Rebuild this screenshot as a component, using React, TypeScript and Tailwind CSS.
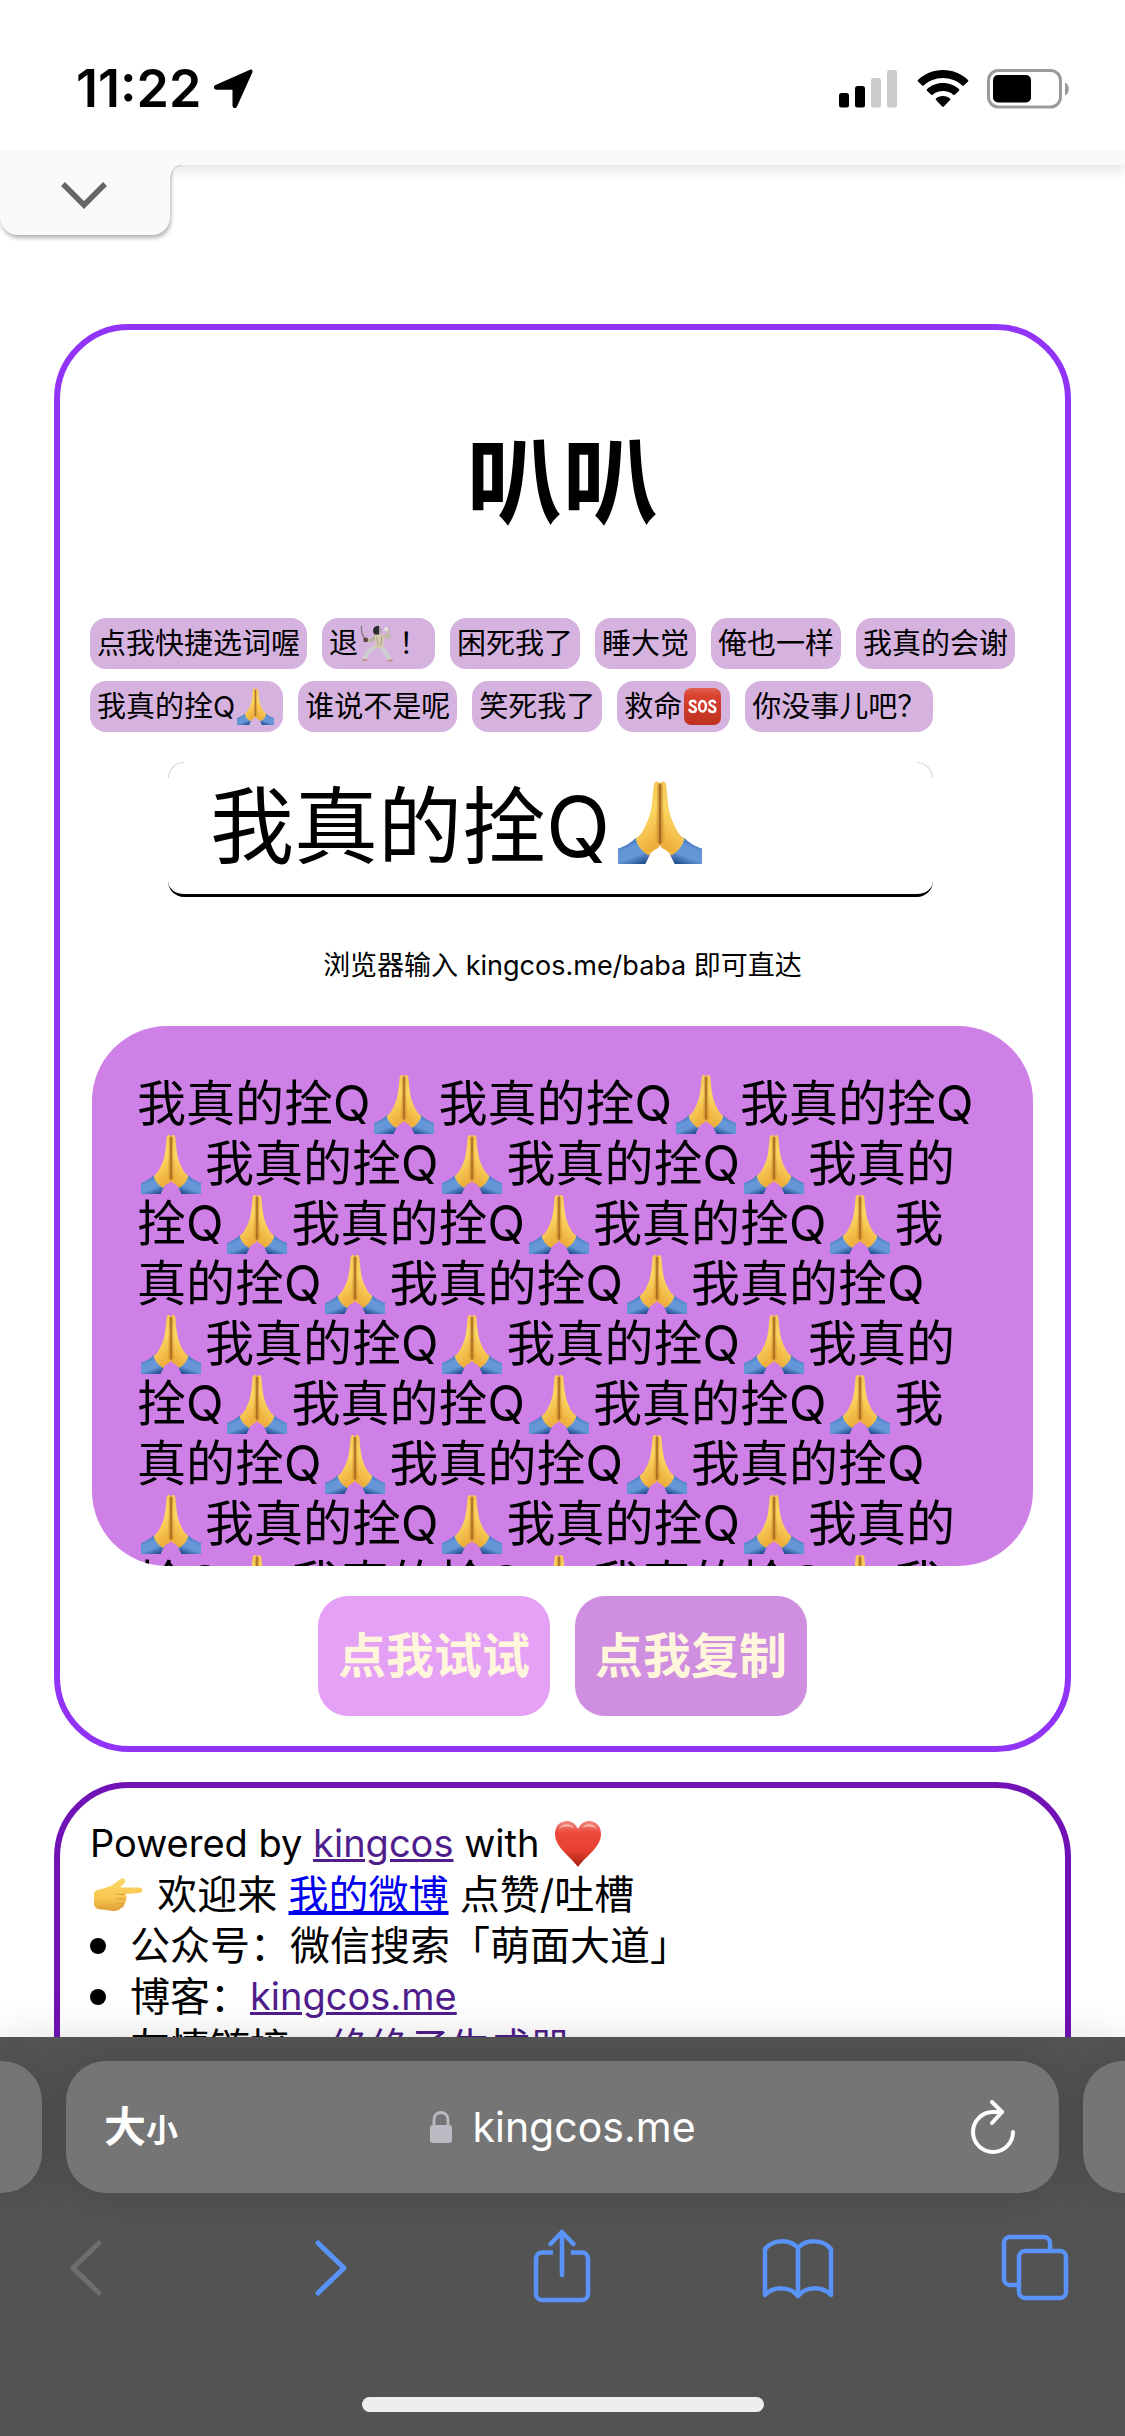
import React from 'react';

const PHRASE = '我真的拴Q';

type IconProps = { className: string };

function EmojiDefs() {
  return (
    <svg className="absolute h-0 w-0" aria-hidden="true">
      <defs>
        <linearGradient id="skin" x1="0" y1="0" x2="0.3" y2="1">
          <stop offset="0" stopColor="#f2bf4a" />
          <stop offset="0.55" stopColor="#fbd562" />
          <stop offset="1" stopColor="#eeaf3c" />
        </linearGradient>
        <linearGradient id="skinDark" x1="0" y1="0" x2="1" y2="0">
          <stop offset="0" stopColor="#e0a033" stopOpacity="0" />
          <stop offset="1" stopColor="#a8661a" />
        </linearGradient>
        <linearGradient id="sleeve" x1="0.3" y1="0" x2="0.8" y2="1">
          <stop offset="0" stopColor="#3468b0" />
          <stop offset="0.35" stopColor="#6496d8" />
          <stop offset="0.65" stopColor="#6496d8" />
          <stop offset="1" stopColor="#1f4a8c" />
        </linearGradient>
        <linearGradient id="heart" x1="0" y1="0" x2="0" y2="1">
          <stop offset="0" stopColor="#f0877c" />
          <stop offset="0.25" stopColor="#ee4a3d" />
          <stop offset="0.65" stopColor="#e5402f" />
          <stop offset="1" stopColor="#a51f12" />
        </linearGradient>
        <linearGradient id="sos" x1="0" y1="0" x2="0" y2="1">
          <stop offset="0" stopColor="#e0604e" />
          <stop offset="0.2" stopColor="#d9432f" />
          <stop offset="1" stopColor="#bf3120" />
        </linearGradient>
        <linearGradient id="point" x1="0" y1="0" x2="0" y2="1">
          <stop offset="0" stopColor="#fbd568" />
          <stop offset="0.6" stopColor="#f8c750" />
          <stop offset="1" stopColor="#e09d38" />
        </linearGradient>
      </defs>
    </svg>
  );
}

function PrayHalf() {
  return (
    <>
      <path d="M0 49C5 47 9 45 13 41C14 47 17 51 23 53L19.500 60H0Z" fill="url(#sleeve)" />
      <path
        d="M30 3C29.500 .5 26.500 .2 25.700 3C25 8 25 12 24.200 17C23.500 24 21.500 29 18.500 35C16.500 38.500 14.500 41 12.500 42C14 47 17 51 22 54C23.500 51.500 26 50 28 49C29.500 48 30 47 30 45.500Z"
        fill="url(#skin)"
      />
      <path d="M27.800 5C28 18 27.500 33 25.500 42C27 45 29 46 30 45V3C29.400 1.500 28.500 2 27.800 5Z" fill="url(#skinDark)" opacity="0.7" />
    </>
  );
}

function Pray({ className }: IconProps) {
  return (
    <svg viewBox="0 0 60 60" className={className} role="img" aria-label="🙏">
      <PrayHalf />
      <g transform="matrix(-1 0 0 1 60 0)">
        <PrayHalf />
      </g>
      <path d="M30 3V46" stroke="#96591b" strokeWidth="0.900" />
    </svg>
  );
}

function Sos({ className }: IconProps) {
  return (
    <svg viewBox="0 0 36 36" className={className} role="img" aria-label="🆘">
      <rect width="36" height="36" rx="7" fill="url(#sos)" />
      <g fill="none" stroke="#fff" strokeWidth="2.400" strokeLinecap="round" strokeLinejoin="round">
        <path d="M11.200 14C10.200 11.800 5.800 12 5.800 14.700C5.800 18.300 11.500 17 11.500 20.800C11.500 24 6.300 24 5.300 21.200" />
        <ellipse cx="18" cy="17.800" rx="3.300" ry="5.200" />
        <path d="M30.200 14C29.200 11.800 24.800 12 24.800 14.700C24.800 18.300 30.500 17 30.500 20.800C30.500 24 25.300 24 24.300 21.200" />
      </g>
    </svg>
  );
}

function Fencer({ className }: IconProps) {
  return (
    <svg viewBox="0 0 36 36" className={className} role="img" aria-label="🤺">
      <path d="M1.500 1C1 6 2 10 5 14" fill="none" stroke="#77757a" strokeWidth="1.200" />
      <g fill="none" strokeLinecap="round" strokeLinejoin="round">
        <path d="M15 11.500L11 15L6 14.500" stroke="#b9b2a2" strokeWidth="3.400" />
        <path d="M22 11L28 12L26.500 5" stroke="#c3bcab" strokeWidth="3.400" />
        <path d="M15.500 21L8.500 25L4.500 32" stroke="#cfcfd2" strokeWidth="4" />
        <path d="M20.500 21L24.500 27L28.500 32.500" stroke="#cfcfd2" strokeWidth="4" />
        <path d="M3 34H6M28 34.500H31" stroke="#c98d84" strokeWidth="2" />
      </g>
      <path d="M14 9.500L22.500 9L23.500 13L22 22.500L14 22.500L15 16Z" fill="#d3cab0" />
      <path d="M16 12L18 20M21 11L20.500 20" stroke="#a89d82" strokeWidth="0.900" />
      <circle cx="17" cy="5" r="4.200" fill="#a9a8ab" />
      <path d="M18.500 .8C12.500 .5 11.500 6 14 9.200C16 9.500 18.500 9 18.500 9Z" fill="#2c2b2f" />
      <circle cx="25.500" cy="4" r="2" fill="#e9e4da" />
      <circle cx="5.500" cy="14.500" r="2.300" fill="#5c4642" />
    </svg>
  );
}

function Heart({ className }: IconProps) {
  return (
    <svg viewBox="0 0 48 48" className={className} role="img" aria-label="❤️">
      <path d="M24 9C21 3 17 1 13 1C6 1 1 6 1 14C1 27 15 35 24 47C33 35 47 27 47 14C47 6 42 1 35 1C31 1 27 3 24 9Z" fill="url(#heart)" />
      <path d="M5 9C7 4 16 2 20 8C15 6 9 6 5 9ZM28 8C32 2 41 4 43 9C39 6 33 6 28 8Z" fill="#fff" opacity="0.5" />
    </svg>
  );
}

function PointRight({ className }: IconProps) {
  return (
    <svg viewBox="0 0 50 34" className={className} role="img" aria-label="👉">
      <path
        d="M1 16C1 12 5 12 10 10.500C17 9 21 6 27 1.500C31 -1 34 2 31.500 5C30 7 28 8 27 9.500L46 9.500C50.500 9.800 50.500 14.800 46 15L32 16C34.500 18 33.500 20 32.500 20.500C34 22.500 33 25 31 25.500C32 28 30 30 28 30C26 33 21 33.500 16 32.500C9 31 1 33 1 25Z"
        fill="url(#point)"
      />
      <path d="M32 16C29 17 26 16.500 24 16M32.500 20.500C29 21.500 26 21 24 20.500M31 25.500C29 26.500 26 26 24 25" fill="none" stroke="#d99a35" strokeWidth="1" strokeLinecap="round" />
    </svg>
  );
}

function StatusBar() {
  return (
    <header className="flex h-[150px] shrink-0 items-center justify-between pr-[55px] pl-[76px] pt-7">
      <div className="flex items-center gap-3">
        <span className="text-[52px] leading-none font-semibold">11:22</span>
        <svg viewBox="0 0 40 40" className="size-10" aria-label="Location">
          <path d="M37 .800C39 0 40 1.500 39.300 3.500L24 37.500C23 40 19.500 39.500 19.500 36.500V21.500C19.500 21 19 20.700 18.500 20.700H3.500C.5 20.700 0 17 2.500 16Z" />
        </svg>
      </div>
      <div className="flex items-center gap-[18px]">
        <svg viewBox="0 0 60 38" className="h-[38px] w-[60px]" aria-label="Signal">
          <rect x="0" y="23" width="10" height="14.500" rx="2.500" />
          <rect x="16" y="16" width="10" height="21.500" rx="2.500" />
          <rect x="32" y="8" width="10" height="29.500" rx="2.500" fill="#cbcbcb" />
          <rect x="48" y="0" width="10" height="37.500" rx="2.500" fill="#cbcbcb" />
        </svg>
        <svg viewBox="0 0 52 38" className="h-[38px] w-[52px]" aria-label="Wi-Fi">
          <path d="M26 0C36 0 45 4 51 10C51.500 10.500 51.500 11 51 11.500L46.800 15.500C46.300 16 45.800 16 45.300 15.500C40 10.800 33.500 8 26 8C18.500 8 12 10.800 6.700 15.500C6.200 16 5.700 16 5.200 15.500L1 11.500C.5 11 .5 10.500 1 10C7 4 16 0 26 0Z" />
          <path d="M26 13C32.500 13 38 15.500 42 19.200C42.500 19.700 42.500 20.200 42 20.700L37.800 24.700C37.300 25.200 36.800 25.200 36.300 24.700C33.500 22.300 30 21 26 21C22 21 18.500 22.300 15.700 24.700C15.200 25.200 14.700 25.200 14.200 24.700L10 20.700C9.500 20.200 9.500 19.700 10 19.200C14 15.500 19.500 13 26 13Z" />
          <path d="M26 26C29 26 31.500 27 33 28.500C33.500 29 33.500 29.500 33 30L26.800 36.500C26.400 37 25.600 37 25.200 36.500L19 30C18.500 29.500 18.500 29 19 28.500C20.500 27 23 26 26 26Z" />
        </svg>
        <svg viewBox="0 0 83 40" className="h-10 w-[83px]" aria-label="Battery">
          <rect x="1.500" y="1.500" width="72" height="36.500" rx="10" fill="none" stroke="#9a9a9a" strokeWidth="3" />
          <rect x="6" y="6" width="38" height="27.500" rx="5" />
          <path d="M78 13.500C83 15 83 25 78 26.500Z" fill="#9a9a9a" />
        </svg>
      </div>
    </header>
  );
}

const CHIPS: { text: string; emoji?: 'fencer' | 'pray' | 'sos'; after?: string }[] = [
  { text: '点我快捷选词喔' },
  { text: '退', emoji: 'fencer', after: '！' },
  { text: '困死我了' },
  { text: '睡大觉' },
  { text: '俺也一样' },
  { text: '我真的会谢' },
  { text: '我真的拴Q', emoji: 'pray' },
  { text: '谁说不是呢' },
  { text: '笑死我了' },
  { text: '救命', emoji: 'sos' },
  { text: '你没事儿吧？' },
];

function Chips() {
  return (
    <div className="flex flex-wrap gap-x-[15px] gap-y-3">
      {CHIPS.map((chip) => (
        <button key={chip.text} className="flex h-[51px] items-center rounded-2xl bg-[#d6b2df] px-[7px] text-[29px] leading-none">
          {chip.text}
          {chip.emoji === 'fencer' && <Fencer className="mx-0.5 size-[37px]" />}
          {chip.emoji === 'pray' && <Pray className="mx-0.5 size-[37px]" />}
          {chip.emoji === 'sos' && <Sos className="mx-0.5 size-[37px]" />}
          {chip.after}
        </button>
      ))}
    </div>
  );
}

function PhraseInput() {
  return (
    <label className="relative mt-[30px] mr-[102px] ml-[78px] flex h-[135px] items-center rounded-2xl border-b-[3px] border-black pb-3 pl-[42px]">
      <span className="sr-only">词语</span>
      <input defaultValue={PHRASE} className="[field-sizing:content] bg-transparent pb-1 text-[84px] leading-none outline-none" />
      <Pray className="ml-2 size-[84px]" />
      <span className="absolute top-0 left-0 size-4 rounded-tl-2xl border-t border-l border-gray-300" />
      <span className="absolute top-0 right-0 size-4 rounded-tr-2xl border-t border-r border-gray-300" />
    </label>
  );
}

function Output() {
  return (
    <div className="mx-0.5 mt-10 h-[540px] overflow-hidden rounded-[75px] bg-[#cf80e6] pt-12 pr-[50px] pl-[45px] text-[49px] leading-[60px]">
      {Array.from({ length: 27 }, (_, i) => (
        <React.Fragment key={i}>
          {PHRASE}
          <Pray className="mx-1 inline-block size-[60px] align-top" />
        </React.Fragment>
      ))}
    </div>
  );
}

function BrowserBar() {
  return (
    <footer className="relative h-[399px] shrink-0 bg-[#535354] text-white shadow-[0_0_40px_rgba(0,0,0,0.12)]">
      <div className="flex gap-6 pt-6">
        <div className="h-[132px] w-[42px] rounded-r-[40px] bg-[#757476] shadow-[0_0_40px_rgba(0,0,0,0.15)]" />
        <div className="flex h-[132px] flex-1 items-center justify-between rounded-[40px] bg-[#757576] pr-11 pl-[38px] shadow-[0_0_40px_rgba(0,0,0,0.15)]">
          <button className="flex items-baseline leading-none font-bold" aria-label="大小">
            <span className="text-[42px]">大</span>
            <span className="text-[32px]">小</span>
          </button>
          <a href="#address" className="flex items-center gap-5 text-[41px] leading-none">
            <svg viewBox="0 0 22 32" className="h-8 w-[22px]" aria-hidden="true">
              <rect y="14" width="22" height="18" rx="3" fill="#babac3" />
              <path d="M4 15V9C4 -1 18 -1 18 9V15" fill="none" stroke="#babac3" strokeWidth="2.800" />
            </svg>
            kingcos.me
          </a>
          <button aria-label="Reload" className="flex w-[67px] justify-end">
            <svg viewBox="0 0 44 54" className="h-[54px] w-11" fill="none" stroke="#fff" strokeWidth="4" strokeLinecap="round" strokeLinejoin="round">
              <path d="M42 32A20 20 0 1 1 22 12H31" />
              <path d="M21 2L31 12L21 23" />
            </svg>
          </button>
        </div>
        <div className="h-[132px] w-[42px] rounded-l-[40px] bg-[#757476] shadow-[0_0_40px_rgba(0,0,0,0.15)]" />
      </div>
      <nav className="mt-9 flex justify-between pr-[54px] pl-[50px] text-[#5a93f8]">
        <button aria-label="Back" className="text-[#6e6e70]">
          <svg viewBox="0 0 74 74" className="size-[74px]" fill="none" stroke="currentColor" strokeWidth="5" strokeLinecap="round" strokeLinejoin="round">
            <path d="M49 14L23 39L49 64" />
          </svg>
        </button>
        <button aria-label="Forward">
          <svg viewBox="0 0 74 74" className="size-[74px]" fill="none" stroke="currentColor" strokeWidth="5" strokeLinecap="round" strokeLinejoin="round">
            <path d="M31 14L57 39L31 64" />
          </svg>
        </button>
        <button aria-label="Share">
          <svg viewBox="0 0 74 74" className="size-[74px]" fill="none" stroke="currentColor" strokeWidth="4.500" strokeLinecap="round" strokeLinejoin="round">
            <path d="M29 23.500H18A6 6 0 0 0 12 29.500V65A6 6 0 0 0 18 71H58A6 6 0 0 0 64 65V29.500A6 6 0 0 0 58 23.500H47" strokeLinecap="butt" />
            <path d="M38 46V3M26.500 15L38 3L49.500 15" />
          </svg>
        </button>
        <button aria-label="Bookmarks">
          <svg viewBox="0 0 74 74" className="size-[74px]" fill="none" stroke="currentColor" strokeWidth="4.500" strokeLinecap="round" strokeLinejoin="round">
            <path d="M38 67C30 57 14 57 5 66V20C13 10 30 10 38 19C46 10 63 10 71 20V66C62 57 46 57 38 67V19" />
          </svg>
        </button>
        <button aria-label="Tabs">
          <svg viewBox="0 0 74 74" className="size-[74px]" fill="none" stroke="currentColor" strokeWidth="4.500">
            <rect x="22" y="22" width="47" height="47" rx="6" />
            <path d="M22 56H13A6 6 0 0 1 7 50V14A6 6 0 0 1 13 8H47A6 6 0 0 1 53 14V22" />
          </svg>
        </button>
      </nav>
      <div className="absolute bottom-6 left-1/2 h-[15px] w-[402px] -translate-x-1/2 rounded-full bg-[#eee]" />
    </footer>
  );
}

const ITEM =
  "flex items-center before:mr-6 before:size-4 before:rounded-full before:bg-black before:content-['']";

export default function App() {
  return (
    <div className="flex h-screen flex-col overflow-hidden bg-white font-[Inter,'Noto_Sans_CJK_SC',sans-serif] text-black">
      <EmojiDefs />
      <StatusBar />
      <main className="min-h-0 flex-1 overflow-hidden">
        <div className="relative h-[15px] bg-[#fafafa] shadow-[0_6px_12px_rgba(0,0,0,0.1)]">
          <button
            aria-label="Expand"
            className="absolute top-0 left-0 flex h-[85px] w-[170px] items-center justify-center rounded-b-[18px] bg-[#fafafa] pt-1 pr-0.5 shadow-[1px_3px_4px_rgba(0,0,0,0.3)]"
          >
            <svg viewBox="0 0 46 28" className="h-7 w-[46px]" fill="none" stroke="#666" strokeWidth="5.500">
              <path d="M2 3L23 24L44 3" />
            </svg>
          </button>
          <svg viewBox="0 0 14 32" className="absolute top-0 left-[169px] h-8 w-[14px]" aria-hidden="true">
            <path d="M0 0H14V15C6 15 1 20 1 32H0Z" fill="#fafafa" />
            <path d="M13 15.500C6 15.500 1.500 20 1.500 32" fill="none" stroke="#c8c8c8" />
          </svg>
        </div>

        <section className="mx-[54px] mt-[159px] rounded-[75px] border-[6px] border-[#9234f7] px-[30px] pb-[30px]">
          <h1 className="pt-[79px] text-center text-8xl leading-[144px] font-bold">叭叭</h1>
          <div className="mt-[65px]">
            <Chips />
          </div>
          <PhraseInput />
          <p className="mt-[49px] text-center text-[27px] leading-10">浏览器输入 kingcos.me/baba 即可直达</p>
          <Output />
          <div className="mt-[30px] flex justify-center gap-[25px] text-5xl leading-none font-bold text-[#fff6dc]">
            <button className="h-[120px] w-[232px] rounded-[30px] bg-[#e5a1f5]">点我试试</button>
            <button className="h-[120px] w-[232px] rounded-[30px] bg-[#cf8edf]">点我复制</button>
          </div>
        </section>

        <section className="mx-[54px] mt-[30px] rounded-[75px] border-[6px] border-[#7012b5] px-[30px] pt-[30px] pb-10 text-[40px] leading-[51px]">
          <p className="flex items-center text-[38px] whitespace-pre">
            Powered by <a href="#kingcos" className="text-[#4f1e8c] underline">kingcos</a> with <Heart className="mx-1 size-12" />
          </p>
          <p className="flex items-center whitespace-pre">
            <PointRight className="mx-[3px] h-[34px] w-[50px]" /> 欢迎来 <a href="#weibo" className="text-[#0000ee] underline">我的微博</a> 点赞/吐槽
          </p>
          <ul>
            <li className={ITEM}>公众号：微信搜索「萌面大道」</li>
            <li className={ITEM}>博客：<a href="#blog" className="text-[38px] text-[#4f1e8c] underline">kingcos.me</a></li>
            <li className={ITEM}>友情链接：<a href="#friend" className="text-[#4f1e8c] underline">绝绝子生成器</a></li>
          </ul>
        </section>
      </main>
      <BrowserBar />
    </div>
  );
}
